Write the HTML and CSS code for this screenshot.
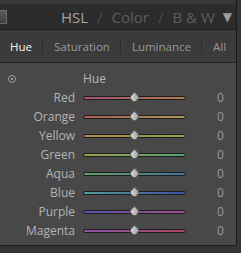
FILE: index.html
```html
<!DOCTYPE html>
<html lang="en">
<head>
    <meta charset="UTF-8">
    <title>HSL</title>
    <link rel="stylesheet" href="styles.css">
</head>
<body>
    <div id="panel">
        <div class="header">
            <div class="collapse"></div>
            <div class="modes">
                <span class="mode active">HSL</span>
                <span class="slash">/</span>
                <span class="mode">Color</span>
                <span class="slash">/</span>
                <span class="mode">B &amp; W</span>
                <span class="arrow">&#9660;</span>
            </div>
        </div>
        <div class="tabs">
            <span class="tab active">Hue</span>
            <span class="sep"></span>
            <span class="tab">Saturation</span>
            <span class="sep"></span>
            <span class="tab">Luminance</span>
            <span class="sep"></span>
            <span class="tab">All</span>
        </div>
        <div class="body">
            <div class="title-row">
                <span class="target"></span>
                <span class="title">Hue</span>
            </div>
            <div class="row"><span class="label">Red</span><div class="track red"><span class="thumb"></span></div><span class="value">0</span></div>
            <div class="row"><span class="label">Orange</span><div class="track orange"><span class="thumb"></span></div><span class="value">0</span></div>
            <div class="row"><span class="label">Yellow</span><div class="track yellow"><span class="thumb"></span></div><span class="value">0</span></div>
            <div class="row"><span class="label">Green</span><div class="track green"><span class="thumb"></span></div><span class="value">0</span></div>
            <div class="row"><span class="label">Aqua</span><div class="track aqua"><span class="thumb"></span></div><span class="value">0</span></div>
            <div class="row"><span class="label">Blue</span><div class="track blue"><span class="thumb"></span></div><span class="value">0</span></div>
            <div class="row"><span class="label">Purple</span><div class="track purple"><span class="thumb"></span></div><span class="value">0</span></div>
            <div class="row"><span class="label">Magenta</span><div class="track magenta"><span class="thumb"></span></div><span class="value">0</span></div>
        </div>
    </div>
</body>
</html>
```

FILE: styles.css
```css
body {
    margin: 0;
    background-color: #353535;
    font-family: 'Open Sans', 'DejaVu Sans', sans-serif;
}

#panel {
    width: 236px;
    border-right: 1px solid #1c1c1c;
    border-bottom: 1px solid #1c1c1c;
}

.header {
    height: 25px;
    border-top: 4px solid #383838;
    background-color: #2c2c2c;
    display: flex;
    align-items: center;
}

.collapse {
    width: 6px;
    height: 12px;
    border: 1px solid #6a6a6a;
    border-left: none;
    background: linear-gradient(#5a5a5a, #3e3e3e);
}

.modes {
    margin-left: auto;
    margin-right: 4px;
    display: flex;
    align-items: center;
    font-size: 15px;
    color: #5c5c5c;
}

.mode.active {
    color: #a2a2a2;
}

.slash {
    margin: 0 9px;
    color: #4e4e4e;
}

.arrow {
    margin-left: 8px;
    font-size: 12px;
    color: #9c9c9c;
}

.tabs {
    height: 32px;
    border-top: 1px solid #1e1e1e;
    border-bottom: 1px solid #232323;
    background-color: #3b3b3b;
    display: flex;
    align-items: center;
    padding-left: 10px;
    font-size: 11.5px;
    color: #989898;
}

.tab.active {
    color: #f2f2f2;
}

.sep {
    width: 1px;
    height: 15px;
    background-color: #2c2c2c;
    margin: 0 11px 0 10px;
}

.body {
    background-color: #484848;
    padding: 6px 0 5px;
}

.title-row {
    height: 19px;
    display: flex;
    align-items: center;
}

.target {
    width: 6px;
    height: 6px;
    border: 1px solid #9c9c9c;
    border-radius: 50%;
    margin-left: 8px;
    position: relative;
}

.target::after {
    content: '';
    position: absolute;
    left: 2px;
    top: 2px;
    width: 2px;
    height: 2px;
    background-color: #9c9c9c;
}

.title {
    margin-left: 67px;
    font-size: 12px;
    color: #b8b8b8;
}

.row {
    height: 19px;
    display: flex;
    align-items: center;
}

.label {
    width: 75px;
    text-align: right;
    font-size: 12px;
    color: #b4b4b4;
}

.track {
    margin-left: 8px;
    width: 101px;
    height: 2px;
    border: 1px solid #1e1e1e;
    border-radius: 3px;
    position: relative;
}

.thumb {
    position: absolute;
    left: 46px;
    top: -4px;
    width: 7px;
    height: 7px;
    background: linear-gradient(135deg, #e0e0e0, #9a9a9a);
    border: 1px solid #5a5a5a;
    border-radius: 50% 0 50% 50%;
    transform: rotate(-45deg);
}

.value {
    margin-left: 31px;
    font-size: 12px;
    color: #9a9a9a;
}

/* muted gradients, like the Lightroom tracks */
.red { background: linear-gradient(to right, #a84e78, #ad7e4e); }
.orange { background: linear-gradient(to right, #a85c58, #a89c56); }
.yellow { background: linear-gradient(to right, #ac8a50, #8aa456); }
.green { background: linear-gradient(to right, #a0a052, #52a074); }
.aqua { background: linear-gradient(to right, #64a05e, #4274a4); }
.blue { background: linear-gradient(to right, #529c98, #4250a4); }
.purple { background: linear-gradient(to right, #5454ac, #a6508e); }
.magenta { background: linear-gradient(to right, #8a52a8, #a8465e); }
```
